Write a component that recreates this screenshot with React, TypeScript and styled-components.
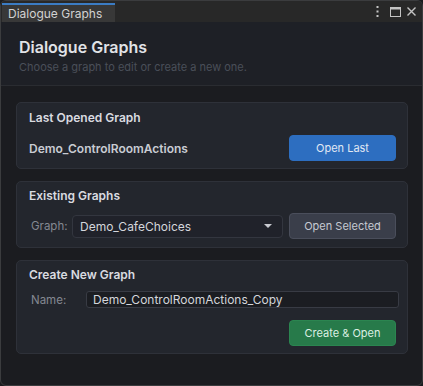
import React from 'react';
import styled, { createGlobalStyle } from 'styled-components';

const GlobalStyle = createGlobalStyle`
  html, body {
    margin: 0;
    padding: 0;
    background: #1b1c1f;
  }
  * {
    box-sizing: border-box;
  }
`;

const Window = styled.div`
  width: 423px;
  height: 386px;
  display: flex;
  flex-direction: column;
  background: #1b1c20;
  border: 1px solid #3b3c3e;
  border-radius: 6px;
  overflow: hidden;
  font-family: Inter, 'Noto Sans', sans-serif;
`;

const TabBar = styled.div`
  display: flex;
  align-items: flex-end;
  justify-content: space-between;
  height: 21px;
  padding-left: 1px;
  background: #282828;
  flex-shrink: 0;
`;

const Tab = styled.div`
  display: flex;
  align-items: center;
  width: 113px;
  height: 19px;
  padding: 0 6px;
  background: #383838;
  border-top: 2px solid #3b7cc4;
  color: #d2d2d2;
  font-size: 12px;
  white-space: nowrap;
`;

const TabIcons = styled.div`
  display: flex;
  align-items: center;
  gap: 6px;
  height: 21px;
  padding-right: 6px;
  color: #c4c4c4;
`;

const IconSlot = styled.span<{ $after?: number }>`
  display: flex;
  margin-right: ${(p) => p.$after ?? 0}px;
`;

const Header = styled.div`
  height: 64px;
  padding: 14px 18px 0;
  background: #1e2026;
  border-bottom: 1px solid #2a2c31;
  flex-shrink: 0;
`;

const Title = styled.h1`
  margin: 0;
  font-size: 16px;
  line-height: 22px;
  font-weight: 600;
  color: #e1e3e7;
`;

const Subtitle = styled.p`
  margin: 2px 0 0;
  font-size: 11px;
  line-height: 14px;
  color: #4a4f59;
`;

const Body = styled.div`
  display: flex;
  flex-direction: column;
  gap: 12px;
  padding: 16px 14px 0 15px;
`;

const Panel = styled.section<{ $top: number; $bottom: number }>`
  display: flex;
  flex-direction: column;
  padding: ${(p) => `${p.$top}px 8px ${p.$bottom}px 12px`};
  background: #23262d;
  border: 1px solid #2e3139;
  border-radius: 5px;
`;

const PanelTitle = styled.h2`
  margin: 0;
  font-size: 12px;
  line-height: 16px;
  font-weight: 600;
  color: #d9dbe0;
`;

const Row = styled.div<{ $gap: number }>`
  display: flex;
  align-items: center;
  gap: 6px;
  margin-top: ${(p) => p.$gap}px;
`;

const GraphName = styled.span`
  flex: 1;
  font-size: 12px;
  font-weight: 600;
  color: #c9ccd3;
`;

const Label = styled.span<{ $width: number }>`
  flex: 0 0 ${(p) => p.$width}px;
  min-width: 0;
  padding-left: 2px;
  font-size: 11.5px;
  white-space: nowrap;
  color: #848891;
`;

const Button = styled.button<{ $variant: 'blue' | 'gray' | 'green' }>`
  flex: 0 0 107px;
  height: 26px;
  margin-left: auto;
  margin-right: 3px;
  border-radius: 4px;
  font-family: Inter, 'Noto Sans', sans-serif;
  font-size: 11px;
  cursor: pointer;
  background: ${(p) => (p.$variant === 'blue' ? '#2d6ec0' : p.$variant === 'green' ? '#277a4a' : '#3a3e4a')};
  border: 1px solid ${(p) => (p.$variant === 'blue' ? '#2d6ec0' : p.$variant === 'green' ? '#2b8550' : '#4a4e5b')};
  color: ${(p) => (p.$variant === 'blue' ? '#e0e8f4' : p.$variant === 'green' ? '#dcefe3' : '#c6cad2')};
`;

const Dropdown = styled.div`
  flex: 0 0 211px;
  display: flex;
  align-items: center;
  justify-content: space-between;
  height: 23px;
  padding: 0 10px 0 7px;
  background: #20222a;
  border: 1px solid #33363f;
  border-radius: 4px;
  color: #d4d6db;
  font-size: 12px;
`;

const Caret = styled.span`
  width: 0;
  height: 0;
  border-left: 4px solid transparent;
  border-right: 4px solid transparent;
  border-top: 4px solid #c8cad0;
`;

const TextField = styled.div`
  flex: 1;
  display: flex;
  align-items: center;
  height: 17px;
  padding: 0 6px;
  background: #1b1d22;
  border: 1px solid #383b44;
  border-radius: 3px;
  color: #d4d6db;
  font-size: 12px;
`;

const ActionRow = styled.div`
  display: flex;
  justify-content: flex-end;
  margin-top: 12px;
`;

const KebabIcon = () => (
  <svg width="3" height="11" viewBox="0 0 3 11">
    <rect x="0.5" y="0" width="2" height="2" fill="currentColor" />
    <rect x="0.5" y="4.5" width="2" height="2" fill="currentColor" />
    <rect x="0.5" y="9" width="2" height="2" fill="currentColor" />
  </svg>
);

const MaximizeIcon = () => (
  <svg width="11" height="10" viewBox="0 0 11 10">
    <rect x="0.5" y="0.5" width="10" height="9" fill="none" stroke="currentColor" />
    <rect x="0" y="0" width="11" height="2.5" fill="currentColor" />
  </svg>
);

const CloseIcon = () => (
  <svg width="9" height="9" viewBox="0 0 9 9">
    <path d="M0.5 0.5 L8.5 8.5 M8.5 0.5 L0.5 8.5" stroke="currentColor" strokeWidth="1.4" />
  </svg>
);

const App = (): JSX.Element => {
  return (
    <>
      <GlobalStyle />
      <Window>
        <TabBar>
          <Tab>Dialogue Graphs</Tab>
          <TabIcons>
            <IconSlot $after={5}>
              <KebabIcon />
            </IconSlot>
            <IconSlot>
              <MaximizeIcon />
            </IconSlot>
            <IconSlot>
              <CloseIcon />
            </IconSlot>
          </TabIcons>
        </TabBar>
        <Header>
          <Title>Dialogue Graphs</Title>
          <Subtitle>Choose a graph to edit or create a new one.</Subtitle>
        </Header>
        <Body>
          <Panel $top={7} $bottom={7}>
            <PanelTitle>Last Opened Graph</PanelTitle>
            <Row $gap={9}>
              <GraphName>Demo_ControlRoomActions</GraphName>
              <Button $variant="blue">Open Last</Button>
            </Row>
          </Panel>
          <Panel $top={6} $bottom={8}>
            <PanelTitle>Existing Graphs</PanelTitle>
            <Row $gap={9}>
              <Label $width={37}>Graph:</Label>
              <Dropdown>
                Demo_CafeChoices
                <Caret />
              </Dropdown>
              <Button $variant="gray">Open Selected</Button>
            </Row>
          </Panel>
          <Panel $top={6} $bottom={7}>
            <PanelTitle>Create New Graph</PanelTitle>
            <Row $gap={8}>
              <Label $width={51}>Name:</Label>
              <TextField>Demo_ControlRoomActions_Copy</TextField>
            </Row>
            <ActionRow>
              <Button $variant="green">Create &amp; Open</Button>
            </ActionRow>
          </Panel>
        </Body>
      </Window>
    </>
  );
};

export default App;
